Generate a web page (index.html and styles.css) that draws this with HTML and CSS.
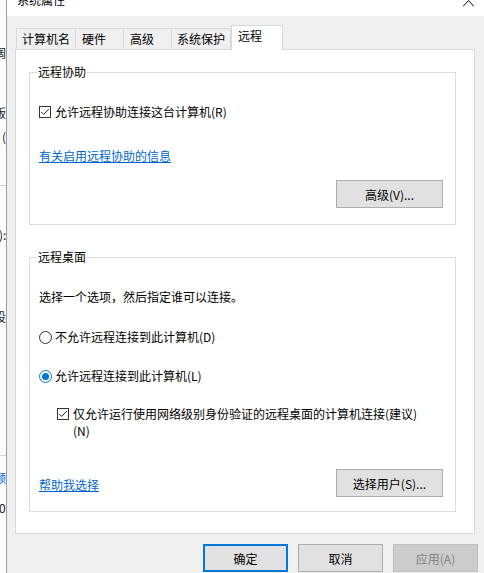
FILE: index.html
```html
<!DOCTYPE html>
<html lang="zh-CN">
<head>
  <meta charset="UTF-8">
  <title>系统属性</title>
  <link rel="stylesheet" href="styles.css">
</head>
<body>
  <!-- window behind the dialog, only its right edge shows -->
  <div class="backwin">
    <div class="frag frag-1">阔</div>
    <div class="frag frag-2">版</div>
    <div class="frag frag-3">(</div>
    <div class="rule rule-1"></div>
    <div class="frag frag-4">):</div>
    <div class="frag frag-5">设</div>
    <div class="rule rule-2"></div>
    <div class="frag frag-6">频</div>
    <div class="frag frag-7">0</div>
  </div>

  <div class="dialog">
    <div class="titlebar">
      <span class="title">系统属性</span>
      <svg class="close" width="11" height="7" viewBox="0 0 11 7">
        <polyline points="0,6.5 5.5,0.5 11,6.5" fill="none" stroke="#000" stroke-width="1"/>
      </svg>
    </div>

    <div class="tabs">
      <div class="tab tab-wide">计算机名</div>
      <div class="tab tab-narrow">硬件</div>
      <div class="tab tab-narrow">高级</div>
      <div class="tab tab-wide tab-last">系统保护</div>
      <div class="tab tab-active">远程</div>
    </div>

    <div class="panel">
      <!-- Remote assistance -->
      <div class="group group-assist">
        <div class="legend">远程协助</div>
        <label class="option option-first">
          <svg class="box" width="12" height="12" viewBox="0 0 12 12">
            <rect x="0.5" y="0.5" width="11" height="11" fill="#fff" stroke="#333"/>
            <path d="M2.3 6 L4.7 8.4 L9.8 3.1" fill="none" stroke="#222" stroke-width="1"/>
          </svg>
          <span>允许远程协助连接这台计算机(R)</span>
        </label>
        <a class="link link-assist" href="#">有关启用远程协助的信息</a>
        <button class="btn btn-side btn-advanced" type="button">高级(V)...</button>
      </div>

      <!-- Remote desktop -->
      <div class="group group-desktop">
        <div class="legend">远程桌面</div>
        <p class="hint">选择一个选项，然后指定谁可以连接。</p>
        <label class="option option-radio1">
          <svg class="radio" width="13" height="13" viewBox="0 0 13 13">
            <circle cx="6.5" cy="6.5" r="6" fill="#fff" stroke="#333"/>
          </svg>
          <span>不允许远程连接到此计算机(D)</span>
        </label>
        <label class="option option-radio2">
          <svg class="radio" width="13" height="13" viewBox="0 0 13 13">
            <circle cx="6.5" cy="6.5" r="6" fill="#fff" stroke="#0078d7"/>
            <circle cx="6.5" cy="6.5" r="3.5" fill="#0078d7"/>
          </svg>
          <span>允许远程连接到此计算机(L)</span>
        </label>
        <label class="option option-nla">
          <svg class="box" width="12" height="12" viewBox="0 0 12 12">
            <rect x="0.5" y="0.5" width="11" height="11" fill="#fff" stroke="#333"/>
            <path d="M2.3 6 L4.7 8.4 L9.8 3.1" fill="none" stroke="#222" stroke-width="1"/>
          </svg>
          <span class="nla-text">仅允许运行使用网络级别身份验证的远程桌面的计算机连接(建议)(N)</span>
        </label>
        <div class="group-foot">
          <a class="link link-help" href="#">帮助我选择</a>
          <button class="btn btn-side" type="button">选择用户(S)...</button>
        </div>
      </div>
    </div>

    <div class="actions">
      <button class="btn btn-default" type="button">确定</button>
      <button class="btn" type="button">取消</button>
      <button class="btn btn-disabled" type="button">应用(A)</button>
    </div>
  </div>
</body>
</html>
```

FILE: styles.css
```css
body {
  margin: 0;
  width: 484px;
  height: 573px;
  overflow: hidden;
  display: flex;
  background-color: #f0f0f0;
  font-family: "Noto Sans CJK SC", "Microsoft YaHei", sans-serif;
  font-size: 12px;
  line-height: 16px;
  color: #000;
}

/* window behind */
.backwin {
  width: 6px;
  flex-shrink: 0;
  background-color: #fbfbfb;
  border-right: 1px solid #9c9c9c;
  overflow: hidden;
}

.frag {
  height: 16px;
  white-space: nowrap;
  color: #222;
}

.frag-1 { margin: 45px 0 0 -6px; }
.frag-2 { margin: 44px 0 0 -6px; }
.frag-3 { margin: 8px 0 0 2px; }
.frag-4 { margin: 41px 0 0 -1px; }
.frag-5 { margin: 66px 0 0 -6px; }
.frag-6 { margin: 14px 0 0 -6px; color: #0066cc; }
.frag-7 { margin: 14px 0 0 -1px; }

.rule {
  height: 1px;
  background-color: #d4d4d4;
}

.rule-1 { margin-top: 40px; }
.rule-2 { margin-top: 130px; }

/* dialog */
.dialog {
  flex: 1;
  display: flex;
  flex-direction: column;
  background-color: #f0f0f0;
}

.titlebar {
  height: 16px;
  display: flex;
  background-color: #fff;
  overflow: hidden;
}

.title {
  margin: -8px 0 0 10px;
}

.close {
  margin-left: auto;
  margin-right: 10px;
}

.tabs {
  display: flex;
  align-items: flex-end;
  margin: 9px 0 -1px 9px;
  height: 25px;
}

.tab {
  box-sizing: border-box;
  height: 21px;
  margin: 0 -1px 1px 0;
  padding: 2px 0 0 5px;
  border: 1px solid #d9d9d9;
  border-bottom: none;
  background-color: #f0f0f0;
  white-space: nowrap;
}

.tab-wide { width: 60px; }
.tab-narrow { width: 49px; padding-left: 6px; }
.tab-last { margin-right: 0; }

.tab-active {
  position: relative;
  z-index: 1;
  width: 52px;
  height: 25px;
  margin: 0;
  padding-left: 6px;
  background-color: #fff;
}

.panel {
  box-sizing: border-box;
  width: 460px;
  margin-left: 8px;
  padding-bottom: 21px;
  border: 1px solid #d9d9d9;
  background-color: #fff;
}

.group {
  box-sizing: border-box;
  width: 427px;
  margin-left: 13px;
  border: 1px solid #dcdcdc;
  display: flex;
  flex-direction: column;
  align-items: flex-start;
}

.group-assist {
  margin-top: 22px;
  padding-bottom: 16px;
}

.group-desktop {
  margin-top: 32px;
  padding-bottom: 14px;
}

.legend {
  margin: -9px 0 0 7px;
  padding: 0 1px;
  background-color: #fff;
}

.option {
  display: flex;
  align-items: center;
  gap: 4px;
  margin-left: 9px;
}

.option .radio {
  margin-right: -1px;
}

.option-first { margin-top: 24px; }
.option-radio1 { margin-top: 24px; }
.option-radio2 { margin-top: 23px; }

.option-nla {
  margin: 21px 0 0 27px;
  align-items: flex-start;
  line-height: 17px;
}

.option-nla .box {
  margin-top: 3px;
}

.nla-text {
  width: 350px;
}

.hint {
  margin: 24px 0 0 9px;
}

.link {
  color: #0066cc;
  text-decoration: underline;
  margin-left: 9px;
}

.link-assist { margin-top: 28px; }

.group-foot {
  align-self: stretch;
  display: flex;
  justify-content: space-between;
  align-items: center;
  margin-top: 30px;
}

.link-help {
  margin-top: 4px;
}

.btn {
  box-sizing: border-box;
  width: 85px;
  height: 28px;
  padding: 0;
  border: 1px solid #adadad;
  background-color: #e1e1e1;
  font-family: inherit;
  font-size: 12px;
  color: #000;
}

.btn-side {
  width: 107px;
  margin-right: 12px;
}

.btn-advanced {
  align-self: flex-end;
  margin-top: 16px;
}

.btn-default {
  border: 2px solid #0078d7;
}

.btn-disabled {
  background-color: #cccccc;
  border-color: #bfbfbf;
  color: #838383;
}

.actions {
  display: flex;
  gap: 10px;
  margin: 10px 0 0 196px;
}
```
